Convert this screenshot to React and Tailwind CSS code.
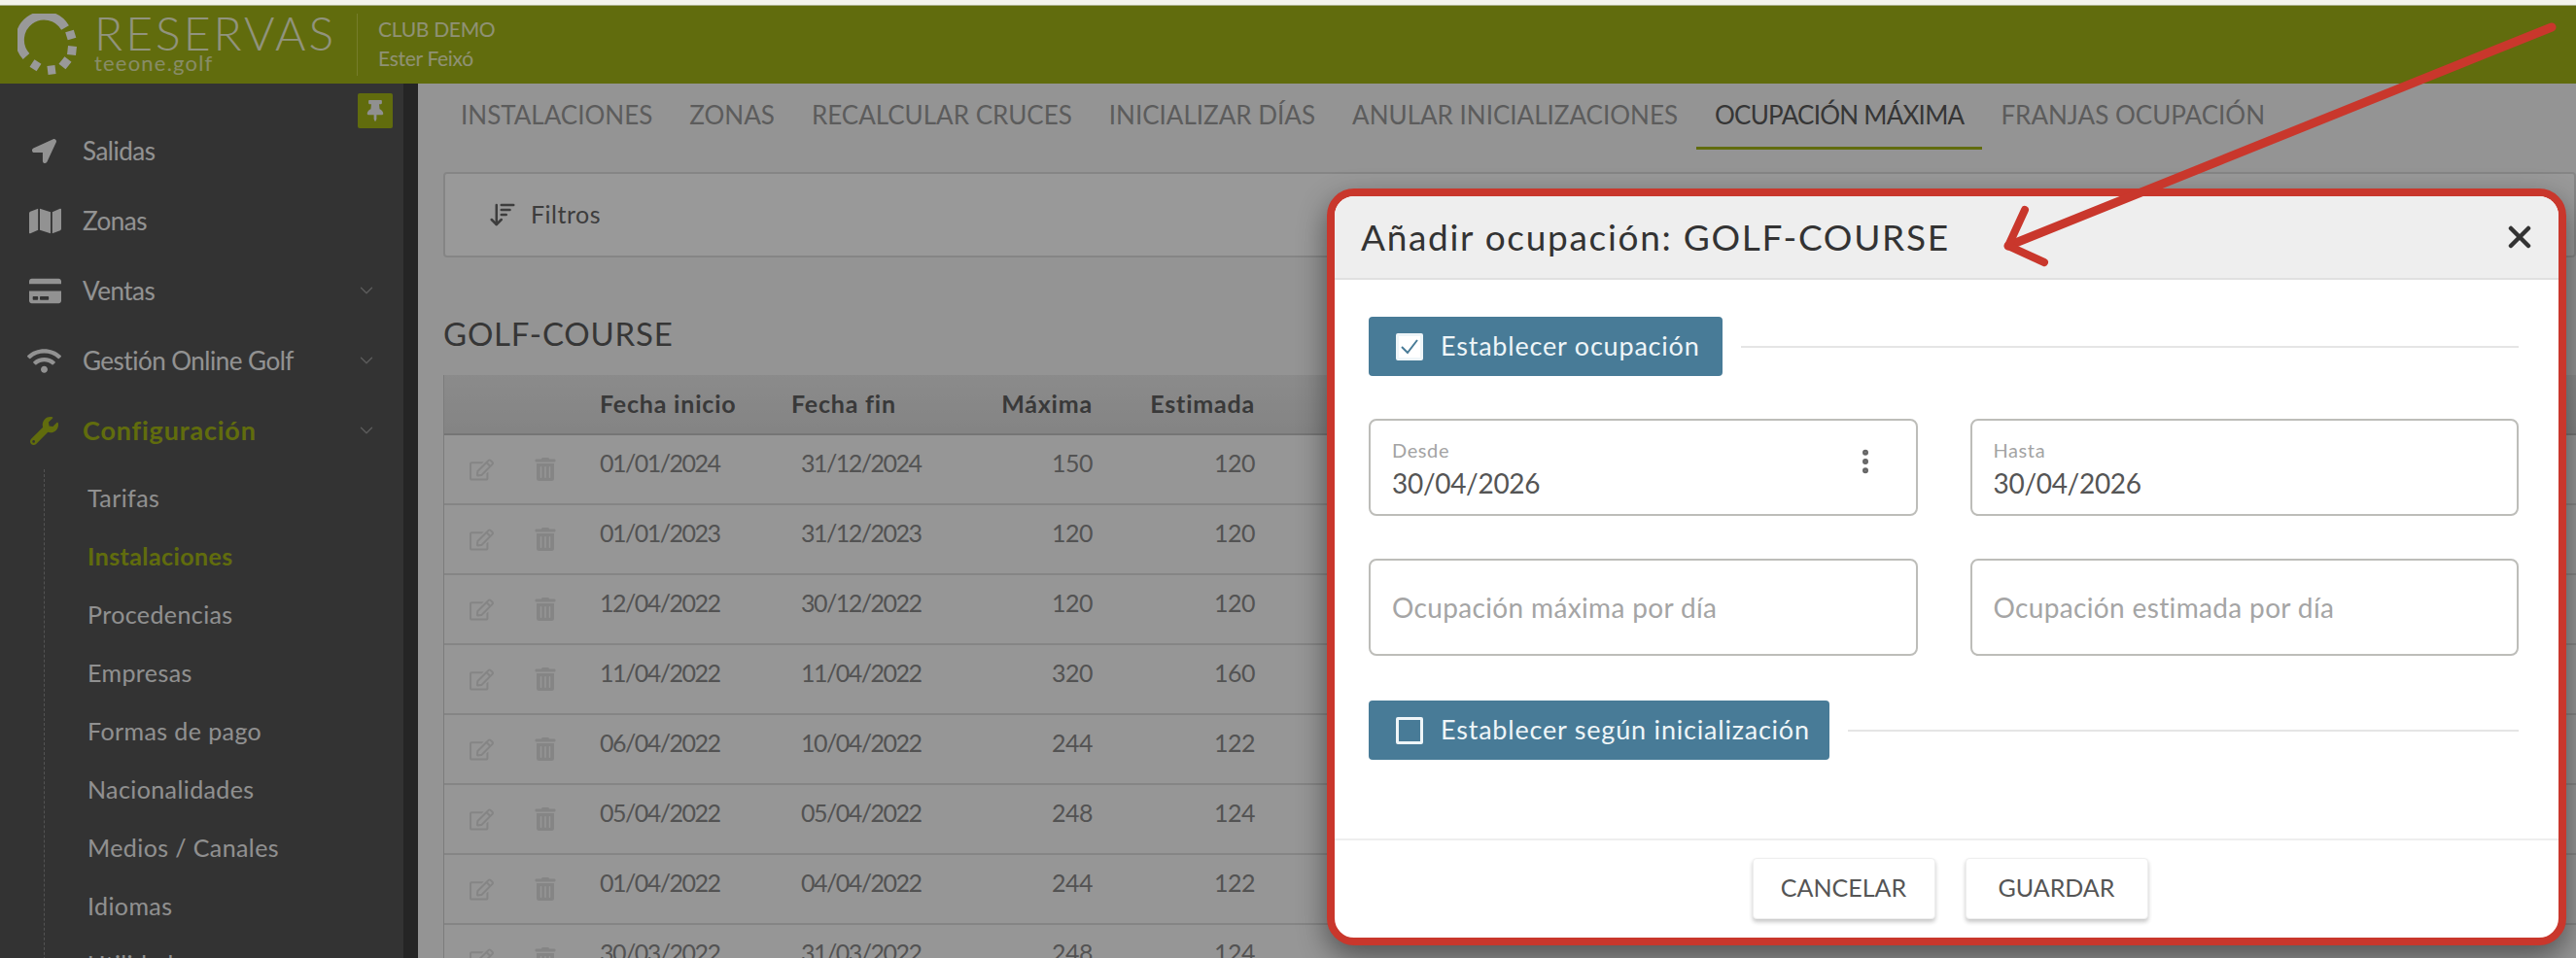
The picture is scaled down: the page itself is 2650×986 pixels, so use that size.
import { ArrowDownWideNarrow, ChevronDown, EllipsisVertical, X } from 'lucide-react';
import { FaLocationArrow, FaMap, FaCreditCard, FaWifi, FaWrench, FaThumbtack, FaRegEdit, FaTrashAlt } from 'react-icons/fa';

const TABS = ['INSTALACIONES', 'ZONAS', 'RECALCULAR CRUCES', 'INICIALIZAR DÍAS', 'ANULAR INICIALIZACIONES', 'OCUPACIÓN MÁXIMA', 'FRANJAS OCUPACIÓN'];

const SUB_ITEMS = ['Tarifas', 'Instalaciones', 'Procedencias', 'Empresas', 'Formas de pago', 'Nacionalidades', 'Medios / Canales', 'Idiomas', 'Utilidades'];

const ROWS = [
  ['01/01/2024', '31/12/2024', '150', '120'],
  ['01/01/2023', '31/12/2023', '120', '120'],
  ['12/04/2022', '30/12/2022', '120', '120'],
  ['11/04/2022', '11/04/2022', '320', '160'],
  ['06/04/2022', '10/04/2022', '244', '122'],
  ['05/04/2022', '05/04/2022', '248', '124'],
  ['01/04/2022', '04/04/2022', '244', '122'],
  ['30/03/2022', '31/03/2022', '248', '124'],
];

function Logo() {
  return (
    <svg width="62" height="64" viewBox="0 0 62 64" className="shrink-0" fill="none" stroke="#fff" strokeWidth="9">
      <path d="M49 14.5 A25 25 0 1 0 9 44" />
      <path d="M53.5 18 L56 26" />
      <path d="M56.5 33.5 L55.5 42.5" />
      <path d="M52 47 L46 54.5" />
      <path d="M39 57.5 L31 58.5" />
      <path d="M15 51 L22 55.5" />
    </svg>
  );
}

function Header() {
  return (
    <div className="h-[80px] bg-[#a2b517] flex items-center pl-[18px] shrink-0">
      <Logo />
      <div className="ml-[17px] w-[270px] -mt-[5px] font-['Lato',sans-serif] text-[#f2f6d2]">
        <div className="text-[48px] font-light leading-[44px] tracking-[3px]">RESERVAS</div>
        <div className="text-[22px] leading-[22px] -mt-[2px] tracking-[1.2px] opacity-80">teeone.golf</div>
      </div>
      <div className="w-px h-[64px] bg-[#c4d148]" />
      <div className="ml-[21px] -mt-[3px] font-['Lato',sans-serif] text-[21px] tracking-[-0.3px] leading-[30px] text-[#eef2c4]">
        <div>CLUB DEMO</div>
        <div>Ester Feixó</div>
      </div>
    </div>
  );
}

function SideItem({ icon, label, active, chevron }) {
  return (
    <div className={`h-[72px] flex items-center pl-[30px] ${active ? 'text-[#a2b517] font-bold text-[27px] tracking-[0.8px]' : 'text-[#f4f4f4] text-[26px] tracking-[-0.5px]'}`}>
      <span className="w-[55px] shrink-0">{icon}</span>
      <span className="whitespace-nowrap">{label}</span>
      {chevron && <ChevronDown size={22} strokeWidth={1.5} className="absolute left-[366px] text-[#9a9a9a]" />}
    </div>
  );
}

function Sidebar() {
  return (
    <div className="relative w-[430px] shrink-0 bg-[#555555] border-r-[15px] border-[#3e3e3e] pt-[33px] font-['Lato',sans-serif] overflow-hidden">
      <div className="absolute left-[368px] top-[10px] w-[36px] h-[36px] rounded-[2px] bg-[#a2b517] flex items-center justify-center">
        <FaThumbtack size={22} className="text-[#f0f0f0]" />
      </div>
      <SideItem label="Salidas" icon={<FaLocationArrow size={25} className="ml-[3px]" />} />
      <SideItem label="Zonas" icon={<FaMap size={33} />} />
      <SideItem label="Ventas" icon={<FaCreditCard size={33} />} chevron />
      <SideItem label="Gestión Online Golf" icon={<FaWifi size={35} className="-ml-[2px]" />} chevron />
      <SideItem label="Configuración" icon={<FaWrench size={29} className="ml-[1px]" />} active chevron />
      <div className="ml-[45px] mt-[4px] pl-[44px] border-l border-dashed border-[#8a8a8a] text-[25px] tracking-[0.4px]">
        {SUB_ITEMS.map((s) => (
          <div key={s} className={`h-[60px] flex items-center ${s === 'Instalaciones' ? 'text-[#a2b517] font-bold' : 'text-[#f0f0f0]'}`}>{s}</div>
        ))}
      </div>
    </div>
  );
}

function Tabs() {
  return (
    <div className="flex h-[68px] pl-[25px] -ml-[26px] text-[26px] text-[#9a9a9a]">
      {TABS.map((t) => (
        <div
          key={t}
          className={`h-[68px] px-[19px] pt-[13px] whitespace-nowrap ${t === 'OCUPACIÓN MÁXIMA' ? 'border-b-[3px] border-[#a2b517] text-[#5a5a5a] tracking-[-0.75px]' : ''}`}
        >
          {t}
        </div>
      ))}
    </div>
  );
}

function OccupancyTable() {
  return (
    <div className="mt-[23px] border-l border-[#cfcfcf] text-[25px]">
      <div className="h-[62px] flex items-center bg-gradient-to-b from-[#e8e8e8] to-[#dcdcdc] border-b-2 border-[#c4c4c4] font-bold text-[#606060] tracking-[0.8px]">
        <div className="w-[160px] shrink-0" />
        <div className="w-[197px] shrink-0">Fecha inicio</div>
        <div className="w-[120px] shrink-0 whitespace-nowrap">Fecha fin</div>
        <div className="w-[190px] shrink-0 text-right">Máxima</div>
        <div className="w-[167px] shrink-0 text-right">Estimada</div>
      </div>
      {ROWS.map((r) => (
        <div key={r[0]} className="h-[72px] flex items-center bg-[#fbfbfb] border-b-2 border-[#dedede] text-[#8a8a8a]">
          <div className="w-[160px] shrink-0 flex items-center pl-[26px] gap-[41px] text-[#dedede]">
            <FaRegEdit size={25} />
            <FaTrashAlt size={24} />
          </div>
          <div className="w-[197px] shrink-0 pb-[12px] tracking-[-1.5px]">{r[0]}</div>
          <div className="w-[120px] shrink-0 pl-[10px] pb-[12px] whitespace-nowrap tracking-[-1.5px]">{r[1]}</div>
          <div className="w-[190px] shrink-0 text-right pb-[12px] tracking-[-0.5px]">{r[2]}</div>
          <div className="w-[167px] shrink-0 text-right pb-[12px] tracking-[-0.5px]">{r[3]}</div>
        </div>
      ))}
    </div>
  );
}

function Content() {
  return (
    <div className="flex-1 min-w-0 bg-[#f7f7f7] pl-[26px] font-['Lato',sans-serif] overflow-hidden">
      <Tabs />
      <div className="mt-[23px] h-[88px] bg-[#ffffff] border-2 border-[#dedede] rounded-[4px] flex items-center pl-[44px] gap-[14px] text-[25px] text-[#666]">
        <ArrowDownWideNarrow size={30} strokeWidth={2} />
        <span className="tracking-[0.5px]">Filtros</span>
      </div>
      <h2 className="mt-[58px] text-[33px] leading-[40px] font-normal text-[#5a5a5a] tracking-[0.8px]">GOLF-COURSE</h2>
      <OccupancyTable />
    </div>
  );
}

function SectionToggle({ label, checked, width }) {
  return (
    <div className="flex items-center gap-[19px]">
      <div className={`h-[61px] ${width} shrink-0 rounded-[4px] bg-[#487b97] flex items-center pl-[28px] gap-[18px] text-[27px] text-[#eef5f8] tracking-[0.8px] whitespace-nowrap`}>
        <span className={`w-[28px] h-[28px] rounded-[2px] border-[3px] border-[#eef5f8] flex items-center justify-center shrink-0 ${checked ? 'bg-white' : ''}`}>
          {checked && (
            <svg width="20" height="18" viewBox="0 0 20 18" fill="none" stroke="#487b97" strokeWidth="2">
              <path d="M2 9l6 6L18 2" />
            </svg>
          )}
        </span>
        {label}
      </div>
      <div className="flex-1 h-[2px] bg-[#e5e5e5]" />
    </div>
  );
}

function Field({ label, value, placeholder, dots }) {
  return (
    <div className={`relative h-[100px] rounded-[8px] border-2 border-[#bdbdb9] pl-[22px] flex flex-col justify-center ${label ? 'pt-[4px]' : ''}`}>
      {label && <div className="text-[20px] leading-[24px] text-[#a3a3a3] tracking-[0.6px]">{label}</div>}
      {value && <div className="mt-[3px] text-[28px] leading-[38px] text-[#555] tracking-[-0.3px]">{value}</div>}
      {placeholder && <div className="text-[28px] text-[#a5a5a5] tracking-[0.35px]">{placeholder}</div>}
      {dots && <EllipsisVertical size={32} strokeWidth={2.5} className="absolute left-[493px] top-[26px] text-[#666]" />}
    </div>
  );
}

function FooterButton({ children }) {
  return (
    <button className="w-[188px] h-[63px] rounded-[4px] bg-white border border-[#eeeeee] shadow-[0_3px_4px_rgba(0,0,0,0.22)] text-[25px] text-[#555]">
      {children}
    </button>
  );
}

function Modal() {
  return (
    <div className="absolute left-[1365px] top-[194px] w-[1275px] h-[779px] bg-white rounded-[28px] border-8 border-[#c9372c] shadow-[0_12px_30px_rgba(0,0,0,0.45)] flex flex-col overflow-hidden font-['Lato',sans-serif]">
      <div className="h-[86px] shrink-0 bg-[#eeeeee] border-b-2 border-[#e0e0e0] flex items-center justify-between pl-[27px] pr-[22px]">
        <div className="text-[37px] text-[#333] tracking-[1.7px]">Añadir ocupación: GOLF-COURSE</div>
        <X size={36} strokeWidth={3} className="text-[#333]" />
      </div>
      <div className="flex-1 pl-[35px] pr-[41px] pt-[38px]">
        <SectionToggle label="Establecer ocupación" checked width="w-[364px]" />
        <div className="mt-[44px] grid grid-cols-2 gap-x-[54px] gap-y-[44px]">
          <Field label="Desde" value="30/04/2026" dots />
          <Field label="Hasta" value="30/04/2026" />
          <Field placeholder="Ocupación máxima por día" />
          <Field placeholder="Ocupación estimada por día" />
        </div>
        <div className="mt-[46px]">
          <SectionToggle label="Establecer según inicialización" width="w-[474px]" />
        </div>
      </div>
      <div className="h-[102px] shrink-0 border-t-2 border-[#eeeeee] flex items-center justify-center gap-[31px] pb-[2px] pl-[7px]">
        <FooterButton>CANCELAR</FooterButton>
        <FooterButton>GUARDAR</FooterButton>
      </div>
    </div>
  );
}

export default function App() {
  return (
    <div className="relative w-[2650px] h-[986px] overflow-hidden flex flex-col bg-white">
      <div className="h-[6px] shrink-0 bg-[#f3f3ec] border-b border-[#a9ae88]" />
      <Header />
      <div className="flex flex-1 min-h-0">
        <Sidebar />
        <Content />
      </div>
      {/* backdrop */}
      <div className="absolute inset-x-0 top-[6px] bottom-0 bg-black/40" />
      <Modal />
      {/* red annotation arrow */}
      <svg className="absolute inset-0 pointer-events-none" width="2650" height="986" viewBox="0 0 2650 986" fill="none" stroke="#c9372c" strokeWidth="8" strokeLinecap="round" strokeLinejoin="round">
        <path d="M2625 28L2066 253" strokeWidth="9" />
        <path d="M2083 216L2066 253L2103 270" />
      </svg>
    </div>
  );
}
